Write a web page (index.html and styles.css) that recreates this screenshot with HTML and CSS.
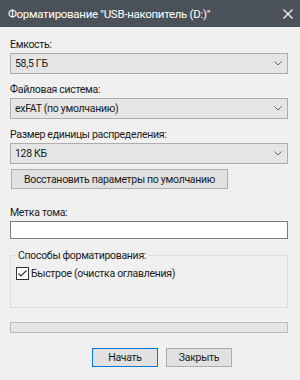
FILE: index.html
```html
<!DOCTYPE html>
<html>
	<head>
		<meta charset="utf-8" />
		<title>Форматирование</title>
		<link rel="stylesheet" href="styles.css">
	</head>
	<body>
		<div class="win">
			<div class="titlebar">
				<span class="title">Форматирование "USB-накопитель (D:)"</span>
				<svg class="close" width="10" height="10" viewBox="0 0 10 10"><path d="M0.5 0.5 L9.5 9.5 M9.5 0.5 L0.5 9.5" stroke="#fff" stroke-width="1.1" fill="none"/></svg>
			</div>
			<div class="content">
				<div class="label lbl-first">Емкость:</div>
				<div class="combo">
					<span>58,5 ГБ</span>
					<svg class="chev" width="8" height="5" viewBox="0 0 8 5"><path d="M0.5 0.5 L4 4 L7.5 0.5" stroke="#606060" fill="none"/></svg>
				</div>

				<div class="label">Файловая система:</div>
				<div class="combo">
					<span>exFAT (по умолчанию)</span>
					<svg class="chev" width="8" height="5" viewBox="0 0 8 5"><path d="M0.5 0.5 L4 4 L7.5 0.5" stroke="#606060" fill="none"/></svg>
				</div>

				<div class="label">Размер единицы распределения:</div>
				<div class="combo">
					<span>128 КБ</span>
					<svg class="chev" width="8" height="5" viewBox="0 0 8 5"><path d="M0.5 0.5 L4 4 L7.5 0.5" stroke="#606060" fill="none"/></svg>
				</div>

				<div class="btn btn-restore">Восстановить параметры по умолчанию</div>

				<div class="label lbl-vol">Метка тома:</div>
				<div class="input"></div>

				<div class="group">
					<div class="legend">Способы форматирования:</div>
					<div class="check-row">
						<svg class="check" width="13" height="13" viewBox="0 0 13 13">
							<rect x="0.5" y="0.5" width="12" height="12" fill="#fff" stroke="#333"/>
							<path d="M2.5 6.5 L5 9 L10.5 3.5" stroke="#333" stroke-width="1.2" fill="none"/>
						</svg>
						<span>Быстрое (очистка оглавления)</span>
					</div>
				</div>

				<div class="progress"></div>

				<div class="actions">
					<div class="btn btn-main">Начать</div>
					<div class="btn">Закрыть</div>
				</div>
			</div>
		</div>
	</body>
</html>
```
FILE: styles.css
```css
*{
	margin: 0;
	padding: 0;
	box-sizing: border-box;
}
body{
	width: 300px;
	height: 380px;
	overflow: hidden;
	background-color: #f0f0f0;
	font-family: Roboto, "Liberation Sans", sans-serif;
	font-size: 10.5px;
	letter-spacing: -0.3px;
	color: #1a1a1a;
	white-space: nowrap;
}
.titlebar{
	height: 27px;
	background-color: #4b5158;
	display: flex;
	align-items: center;
	justify-content: space-between;
	padding: 0 7px 0 8px;
}
.title{
	color: #fff;
	font-size: 11.5px;
}
.content{
	padding: 0 12px 0 10px;
}
.label{
	line-height: 15px;
	height: 15px;
	margin-top: 8px;
	margin-bottom: 1px;
}
.lbl-first{
	margin-top: 10px;
}
.combo{
	height: 21px;
	background-color: #e5e5e5;
	border: 1px solid #adadad;
	display: flex;
	align-items: center;
	justify-content: space-between;
	padding: 0 5px 0 4px;
}
.btn{
	height: 20px;
	background-color: #e1e1e1;
	border: 1px solid #adadad;
	display: flex;
	align-items: center;
	justify-content: center;
}
.btn-restore{
	width: 217px;
	margin-left: 1px;
	margin-top: 5px;
}
.lbl-vol{
	margin-top: 16px;
}
.input{
	height: 18px;
	background-color: #fff;
	border: 1px solid #7a7a7a;
}
.group{
	margin-top: 16px;
	height: 53px;
	border: 1px solid #dcdcdc;
	position: relative;
	padding: 11px 0 0 5px;
}
.legend{
	position: absolute;
	top: -8px;
	left: 5px;
	padding: 0 2px;
	background-color: #f0f0f0;
	line-height: 15px;
}
.check-row{
	display: flex;
	align-items: center;
	gap: 2px;
}
.check{
	display: block;
}
.progress{
	margin-top: 14px;
	height: 11px;
	background-color: #e6e6e6;
	border: 1px solid #bcbcbc;
}
.actions{
	display: flex;
	gap: 8px;
	margin-top: 15px;
	padding-left: 82px;
}
.actions .btn{
	width: 66px;
	height: 19px;
}
.btn-main{
	border-color: #0078d7;
}
```
